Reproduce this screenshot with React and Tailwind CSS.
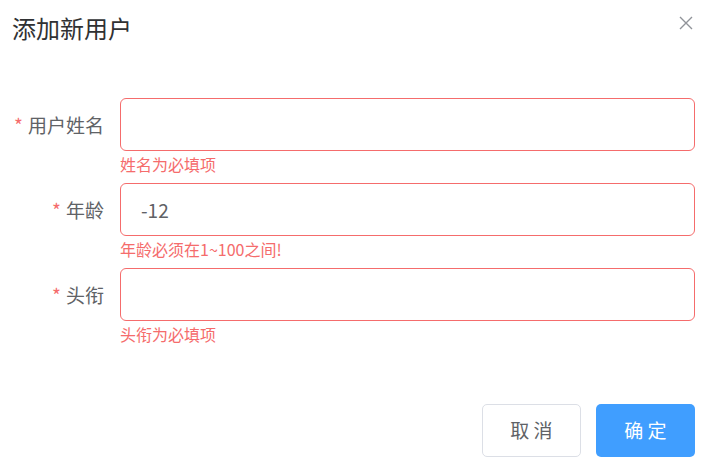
import React, { useState } from "react";

const font = { fontFamily: '"Noto Sans CJK SC", "Noto Sans", sans-serif' };

function FormRow({ label, value, error }) {
    return (
        <div className="flex flex-col">
            <div className="flex items-center">
                <label className="w-[120px] pr-[16px] text-right text-[19px] text-[#606266] leading-none">
                    <span className="text-[#f56c6c] mr-[5px]">*</span>
                    {label}
                </label>
                <input
                    type="text"
                    defaultValue={value}
                    className="flex-1 mr-[16px] h-[53px] border border-[#f56c6c] rounded-[6px] px-[20px] text-[19px] text-[#606266] outline-none"
                    style={font}
                />
            </div>
            <div className="h-[32px] pl-[120px] pt-[5px] text-[16px] leading-[16px] text-[#f56c6c]">
                {error}
            </div>
        </div>
    );
}

export default function App() {
    const [open] = useState(true);

    return (
        <div className="w-[711px] h-[463px] bg-white flex flex-col overflow-hidden" style={font}>
            <div className="h-[56px] pl-[12px] pr-[18px] flex items-center justify-between">
                <h2 className="text-[24px] text-[#303133] leading-none">添加新用户</h2>
                <button type="button" className="w-[14px] h-[14px] flex items-center justify-center mt-[-10px]">
                    <svg width="14" height="14" viewBox="0 0 14 14" fill="none">
                        <path d="M1 1L13 13M13 1L1 13" stroke="#909399" strokeWidth="1.4" />
                    </svg>
                </button>
            </div>

            {open && (
                <form className="mt-[42px] flex flex-col">
                    <FormRow label="用户姓名" value="" error="姓名为必填项" />
                    <FormRow label="年龄" value="-12" error="年龄必须在1~100之间!" />
                    <FormRow label="头衔" value="" error="头衔为必填项" />
                </form>
            )}

            <div className="mt-[51px] pr-[16px] flex justify-end gap-[15px]">
                <button
                    type="button"
                    className="w-[99px] h-[53px] border border-[#dcdfe6] rounded-[5px] bg-white text-[19px] text-[#606266]"
                >
                    取 消
                </button>
                <button
                    type="button"
                    className="w-[99px] h-[53px] rounded-[5px] bg-[#409eff] text-[19px] text-white"
                >
                    确 定
                </button>
            </div>
        </div>
    );
}
